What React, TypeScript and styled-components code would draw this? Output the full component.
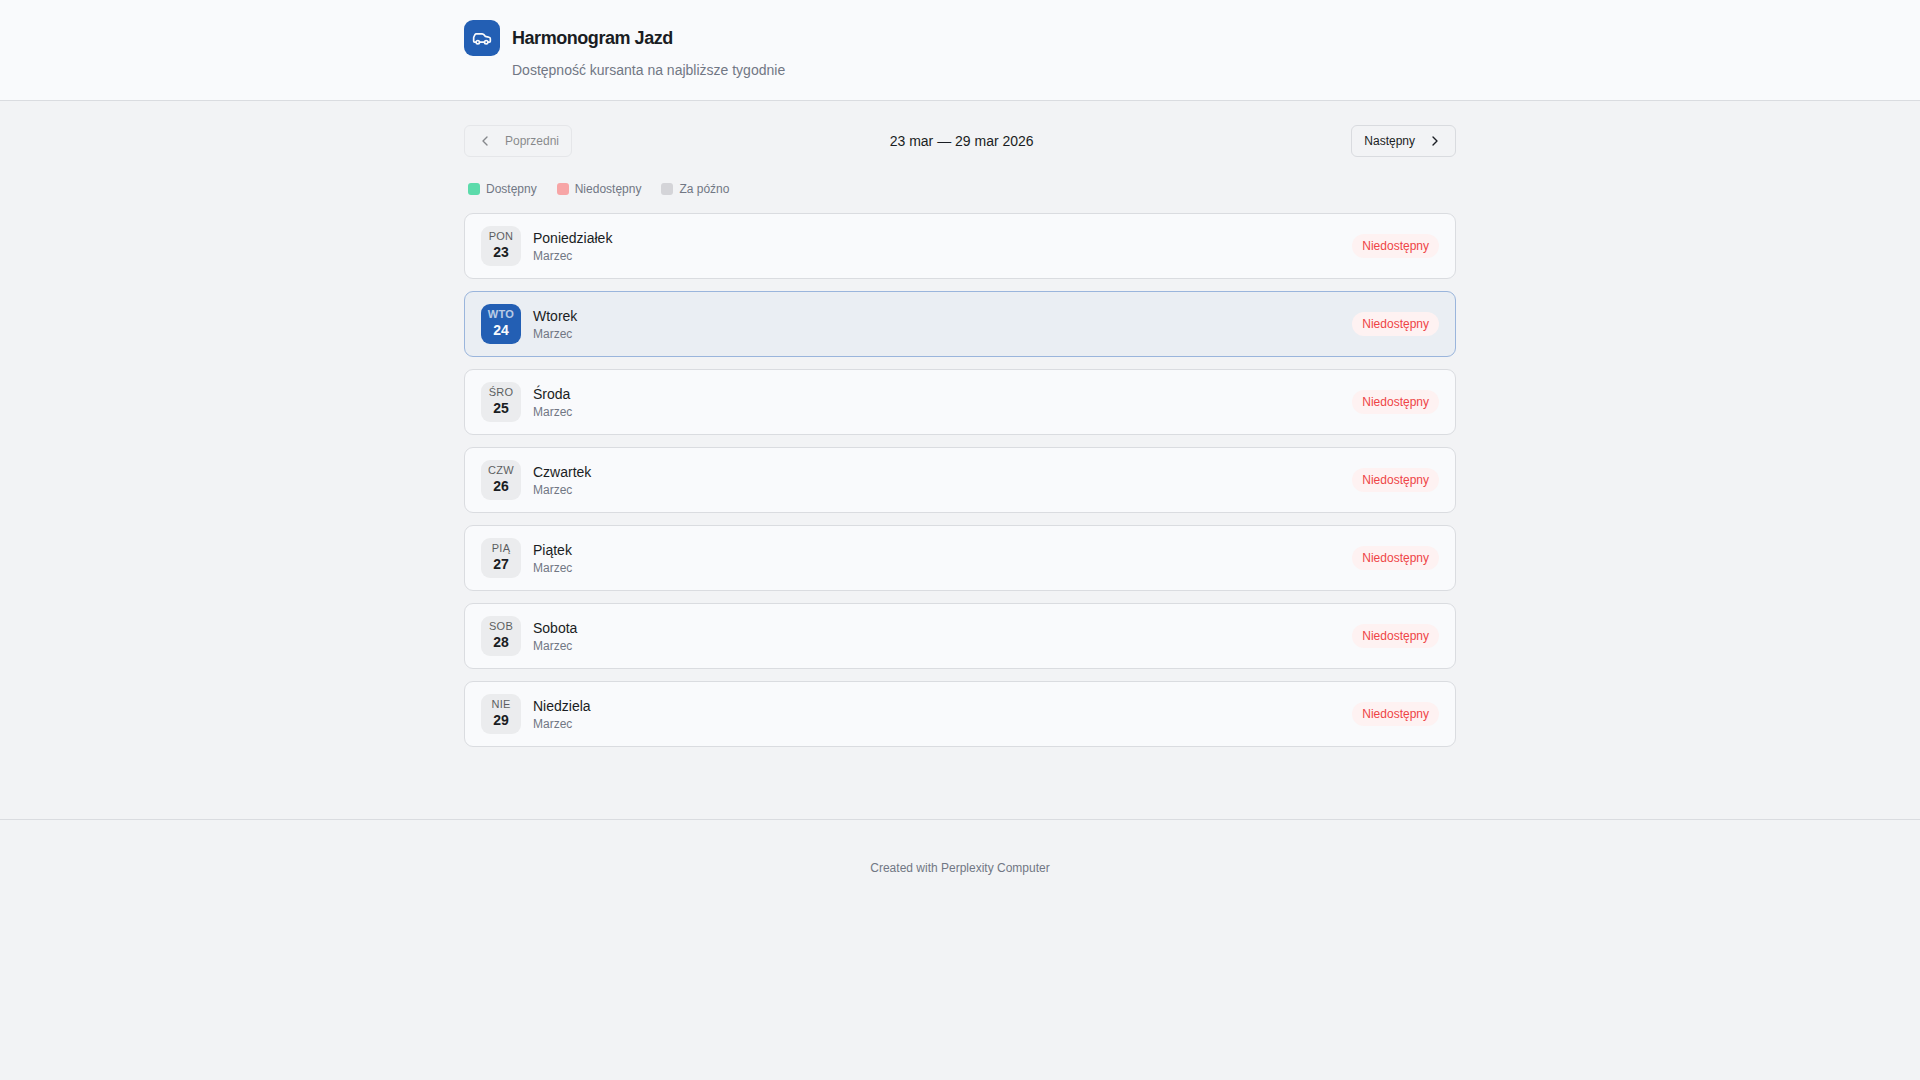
import React, { useState } from "react";
import styled, { createGlobalStyle } from "styled-components";
import { Car, ChevronLeft, ChevronRight } from "lucide-react";

const GlobalStyle = createGlobalStyle`
  *, *::before, *::after { box-sizing: border-box; }
  body {
    margin: 0;
    background: #f2f3f5;
    color: #1a1d23;
    font-family: "Liberation Sans", Arial, sans-serif;
    font-size: 14px;
    line-height: 20px;
    -webkit-font-smoothing: antialiased;
  }
  h1, h2, p, ul { margin: 0; padding: 0; }
`;

const Container = styled.div`
  width: 100%;
  max-width: 1024px;
  margin: 0 auto;
  padding: 0 16px;
`;

const Header = styled.header`
  padding: 20px 0;
  background: #f9fafc;
  border-bottom: 1px solid #dadce0;
`;

const Brand = styled.div`
  display: grid;
  grid-template-columns: 36px 1fr;
  column-gap: 12px;
  row-gap: 4px;
  align-items: center;
`;

const Logo = styled.div`
  display: flex;
  align-items: center;
  justify-content: center;
  height: 36px;
  border-radius: 9px;
  background: #235fb4;
  color: #f9fafc;
`;

const Title = styled.h1`
  font-size: 18px;
  line-height: 28px;
  font-weight: 700;
  letter-spacing: -0.025em;
`;

const Subtitle = styled.p`
  grid-column: 2;
  color: #717784;
`;

const Main = styled.main`
  padding: 24px 0;
`;

const WeekNav = styled.nav`
  display: flex;
  align-items: center;
  justify-content: space-between;
`;

const NavButton = styled.button`
  display: inline-flex;
  align-items: center;
  gap: 12px;
  height: 32px;
  padding: 0 12px;
  border: 1px solid #d9dbdf;
  border-radius: 6px;
  background: transparent;
  color: #1a1d23;
  font: inherit;
  font-size: 12px;
  cursor: pointer;

  &:disabled {
    opacity: 0.5;
    cursor: default;
  }
`;

const Period = styled.h2`
  font-size: 14px;
  line-height: 20px;
  font-weight: 500;
`;

const Legend = styled.ul`
  display: flex;
  gap: 20px;
  margin: 24px 0 16px;
  padding: 0 4px;
  list-style: none;
  color: #717784;
  font-size: 12px;
  line-height: 16px;
`;

const LegendItem = styled.li<{ $color: string }>`
  display: flex;
  align-items: center;
  gap: 6px;

  &::before {
    content: "";
    width: 12px;
    height: 12px;
    border-radius: 3px;
    background: ${({ $color }) => $color};
  }
`;

const DayList = styled.ul`
  display: grid;
  gap: 12px;
  list-style: none;
`;

const DayCard = styled.li<{ $today: boolean }>`
  display: flex;
  align-items: center;
  gap: 12px;
  padding: 12px 16px;
  border: 1px solid ${({ $today }) => ($today ? "#9ab5dc" : "#dadce0")};
  border-radius: 9px;
  background: ${({ $today }) => ($today ? "#eaeef3" : "#f9fafc")};
`;

const DateBox = styled.div<{ $today: boolean }>`
  display: flex;
  flex-direction: column;
  align-items: center;
  justify-content: center;
  width: 40px;
  height: 40px;
  border-radius: 9px;
  background: ${({ $today }) => ($today ? "#235fb4" : "#ebecee")};
  color: ${({ $today }) => ($today ? "#f9fafc" : "#1a1d23")};
`;

const Weekday = styled.span<{ $today: boolean }>`
  font-size: 11px;
  line-height: 12px;
  font-weight: ${({ $today }) => ($today ? 700 : 400)};
  letter-spacing: 0.025em;
  text-transform: uppercase;
  opacity: 0.7;
`;

const DayNumber = styled.span`
  font-size: 14px;
  line-height: 20px;
  font-weight: 700;
`;

const DayText = styled.div`
  flex: 1;
`;

const DayName = styled.p`
  font-weight: 500;
`;

const Month = styled.p`
  color: #717784;
  font-size: 12px;
  line-height: 16px;
`;

const Status = styled.span`
  padding: 4px 10px;
  border-radius: 12px;
  background: #fef2f2;
  color: #ee4546;
  font-size: 12px;
  line-height: 16px;
`;

const Footer = styled.footer`
  margin-top: 48px;
  padding: 40px 16px;
  border-top: 1px solid #dadce0;
  text-align: center;
  font-size: 12px;
  line-height: 16px;
`;

const FooterLink = styled.a`
  color: #717784;
  text-decoration: none;
`;

const legend = [
  { label: "Dostępny", color: "#5cdbab" },
  { label: "Niedostępny", color: "#f7a5a6" },
  { label: "Za późno", color: "#d4d4d8" },
];

const days = [
  "Poniedziałek",
  "Wtorek",
  "Środa",
  "Czwartek",
  "Piątek",
  "Sobota",
  "Niedziela",
];

const FIRST_DAY = 23;
const TODAY = 24;

export default function App() {
  const [today] = useState(TODAY);

  return (
    <>
      <GlobalStyle />
      <Header>
        <Container>
          <Brand>
            <Logo>
              <Car size={20} />
            </Logo>
            <Title>Harmonogram Jazd</Title>
            <Subtitle>Dostępność kursanta na najbliższe tygodnie</Subtitle>
          </Brand>
        </Container>
      </Header>
      <Main>
        <Container>
          <WeekNav>
            <NavButton type="button" disabled>
              <ChevronLeft size={16} />
              Poprzedni
            </NavButton>
            <Period>23 mar — 29 mar 2026</Period>
            <NavButton type="button">
              Następny
              <ChevronRight size={16} />
            </NavButton>
          </WeekNav>
          <Legend>
            {legend.map(({ label, color }) => (
              <LegendItem key={label} $color={color}>
                {label}
              </LegendItem>
            ))}
          </Legend>
          <DayList>
            {days.map((name, index) => {
              const date = FIRST_DAY + index;
              const isToday = date === today;
              return (
                <DayCard key={name} $today={isToday}>
                  <DateBox $today={isToday}>
                    <Weekday $today={isToday}>{name.slice(0, 3)}</Weekday>
                    <DayNumber>{date}</DayNumber>
                  </DateBox>
                  <DayText>
                    <DayName>{name}</DayName>
                    <Month>Marzec</Month>
                  </DayText>
                  <Status>Niedostępny</Status>
                </DayCard>
              );
            })}
          </DayList>
        </Container>
      </Main>
      <Footer>
        <FooterLink href="#">Created with Perplexity Computer</FooterLink>
      </Footer>
    </>
  );
}
